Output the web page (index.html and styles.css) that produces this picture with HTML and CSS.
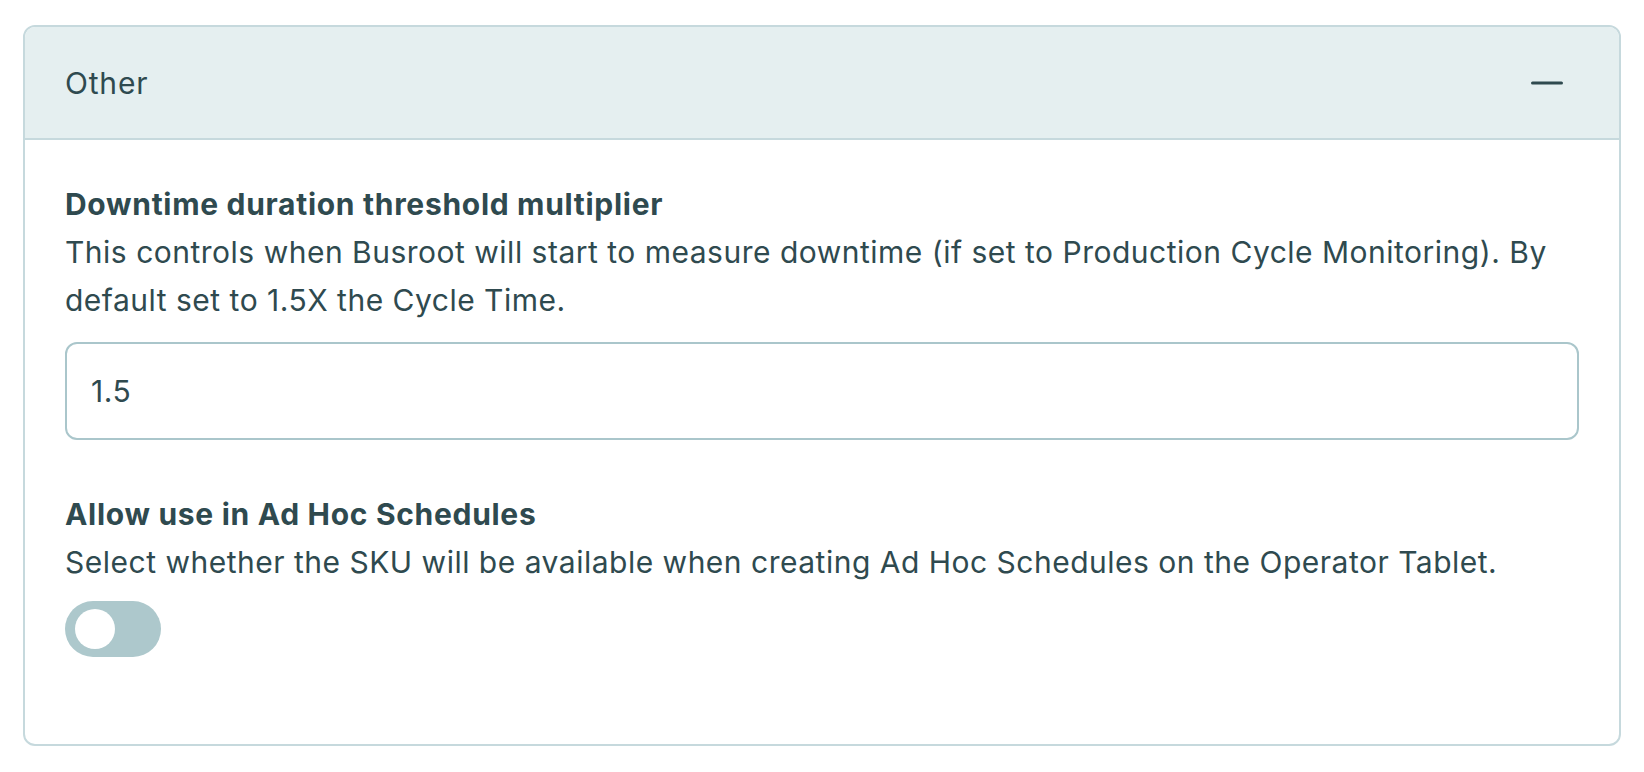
FILE: index.html
```html
<!DOCTYPE html>
<html lang="en">
<head>
    <meta charset="UTF-8">
    <meta name="viewport" content="width=device-width, initial-scale=1.0">
    <title>SKU settings - Other</title>
    <link rel="stylesheet" href="styles.css">
</head>
<body>
    <div class="panel">
        <div class="panel-header">
            <span class="panel-title">Other</span>
            <button type="button" class="collapse-btn" aria-label="Collapse">
                <svg width="32" height="32" viewBox="0 0 32 32">
                    <line x1="1.5" y1="16" x2="30.5" y2="16" stroke="#2f4a4f" stroke-width="3" stroke-linecap="round"/>
                </svg>
            </button>
        </div>

        <div class="panel-body">
            <div class="field">
                <label for="multiplier" class="field-label">Downtime duration threshold multiplier</label>
                <p class="field-help">This controls when Busroot will start to measure downtime (if set to Production Cycle Monitoring). By default set to 1.5X the Cycle Time.</p>
                <input type="text" id="multiplier" class="field-input" value="1.5">
            </div>

            <div class="field field-switch">
                <div class="field-label">Allow use in Ad Hoc Schedules</div>
                <p class="field-help">Select whether the SKU will be available when creating Ad Hoc Schedules on the Operator Tablet.</p>
                <label class="switch">
                    <input type="checkbox">
                    <span class="slider"></span>
                </label>
            </div>
        </div>
    </div>
</body>
</html>
```

FILE: styles.css
```css
body{
    margin: 0;
    padding: 25px 23px;
    background: #fff;
    font-family: Inter, "Liberation Sans", sans-serif;
    color: #2f4a4f;
    letter-spacing: 0.5px;
}

.panel{
    border: 2px solid #c6d9dd;
    border-radius: 12px;
    overflow: hidden;
}

.panel-header{
    display: flex;
    align-items: center;
    justify-content: space-between;
    background-color: #e5eff0;
    border-bottom: 2px solid #c6d9dd;
    padding: 32px 56px 32px 40px;
    height: 113px;
    box-sizing: border-box;
}

.panel-title{
    font-size: 30px;
    line-height: 48px;
    letter-spacing: 0.8px;
}

.collapse-btn{
    display: flex;
    padding: 0;
    border: none;
    background: none;
    cursor: pointer;
}

.panel-body{
    padding: 40px 40px 87px 40px;
}

.field-label{
    display: block;
    font-size: 30px;
    line-height: 48px;
    font-weight: 700;
    letter-spacing: 0.7px;
}

.field-help{
    margin: 0;
    font-size: 30px;
    line-height: 48px;
}

.field-input{
    display: block;
    width: 100%;
    height: 98px;
    box-sizing: border-box;
    margin-top: 18px;
    padding: 0 24px;
    border: 2px solid #aac6cb;
    border-radius: 12px;
    font-family: inherit;
    font-size: 30px;
    letter-spacing: 0.5px;
    color: #2f4a4f;
    outline: none;
}

.field-switch{
    margin-top: 50px;
}

.switch{
    display: inline-block;
    position: relative;
    width: 96px;
    height: 56px;
    margin-top: 15px;
}

.switch input{
    opacity: 0;
    width: 0;
    height: 0;
}

.slider{
    position: absolute;
    inset: 0;
    background-color: #adc8cc;
    border-radius: 28px;
    cursor: pointer;
}

.slider::before{
    content: "";
    position: absolute;
    left: 10px;
    top: 8px;
    width: 40px;
    height: 40px;
    border-radius: 50%;
    background: #fff;
}
```
